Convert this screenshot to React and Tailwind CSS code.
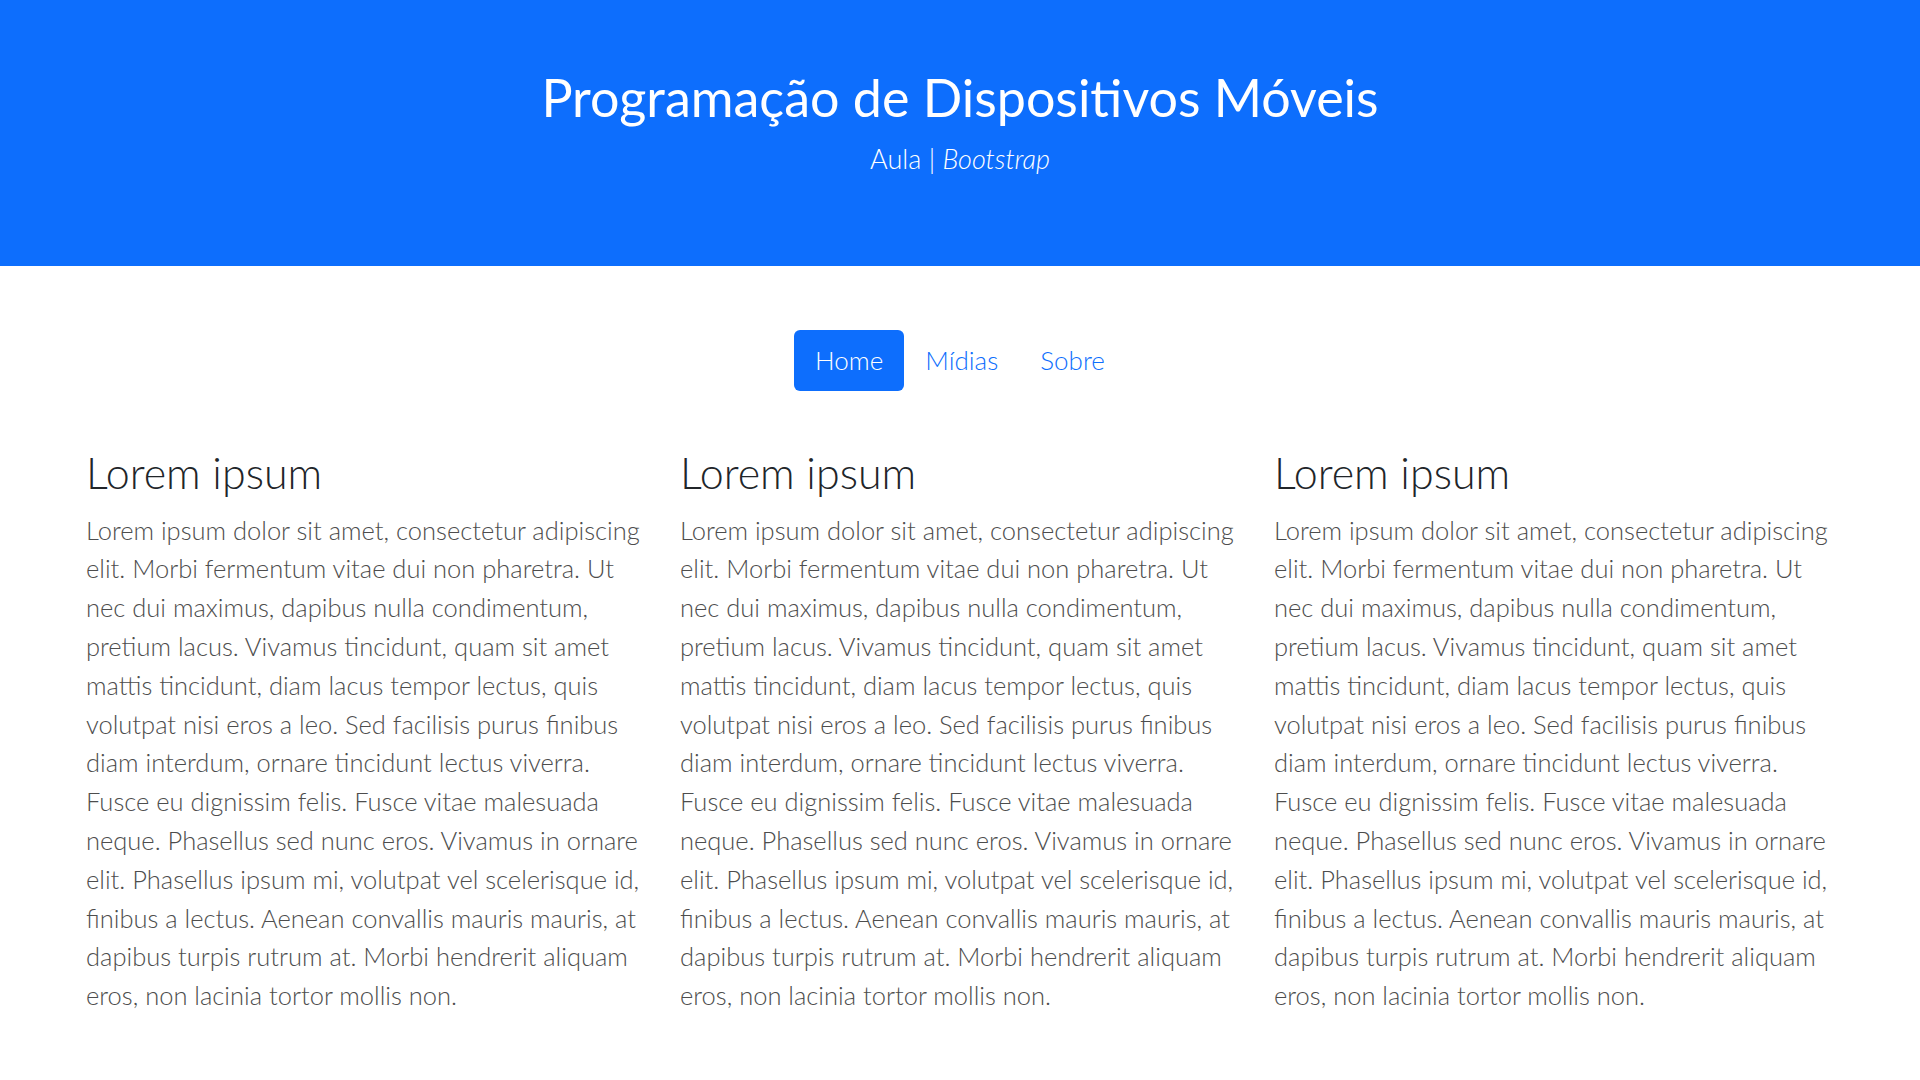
const TEXT =
  'Lorem ipsum dolor sit amet, consectetur adipiscing elit. Morbi fermentum vitae dui non pharetra. Ut nec dui maximus, dapibus nulla condimentum, pretium lacus. Vivamus tincidunt, quam sit amet mattis tincidunt, diam lacus tempor lectus, quis volutpat nisi eros a leo. Sed facilisis purus finibus diam interdum, ornare tincidunt lectus viverra. Fusce eu dignissim felis. Fusce vitae malesuada neque. Phasellus sed nunc eros. Vivamus in ornare elit. Phasellus ipsum mi, volutpat vel scelerisque id, finibus a lectus. Aenean convallis mauris mauris, at dapibus turpis rutrum at. Morbi hendrerit aliquam eros, non lacinia tortor mollis non.';

const LINKS = ['Home', 'Mídias', 'Sobre'];

export default function App() {
  return (
    <div className="min-h-screen bg-white font-['Lato','Liberation_Sans',sans-serif] font-light">

      {/* ── Header ── */}
      <header className="h-[266px] bg-[#0d6efd] text-white flex flex-col items-center pt-[66px]">
        <h1 className="text-[52px] leading-[1.2] font-normal">Programação de Dispositivos Móveis</h1>
        <p className="text-[27px] leading-[1.5] mt-[11px]">
          Aula | <em>Bootstrap</em>
        </p>
      </header>

      {/* ── Nav pills ── */}
      <nav className="flex justify-center mt-[64px]">
        {LINKS.map((l, i) => (
          <a key={l} href="#"
            className={`h-[61px] px-[21px] flex items-center text-[26px] rounded-[6px] ${i === 0 ? 'bg-[#0d6efd] text-white' : 'text-[#0d6efd]'}`}>
            {l}
          </a>
        ))}
      </nav>

      {/* ── Columns ── */}
      <main className="grid grid-cols-3 gap-[34px] px-[86px] mt-[56px]">
        {[0, 1, 2].map(i => (
          <section key={i}>
            <h2 className="text-[43px] leading-[1.2] text-[#212529] font-light mb-[12px]">Lorem ipsum</h2>
            <p className="text-[25.5px] leading-[38.8px] text-[#4d4d4d]">{TEXT}</p>
          </section>
        ))}
      </main>
    </div>
  );
}
